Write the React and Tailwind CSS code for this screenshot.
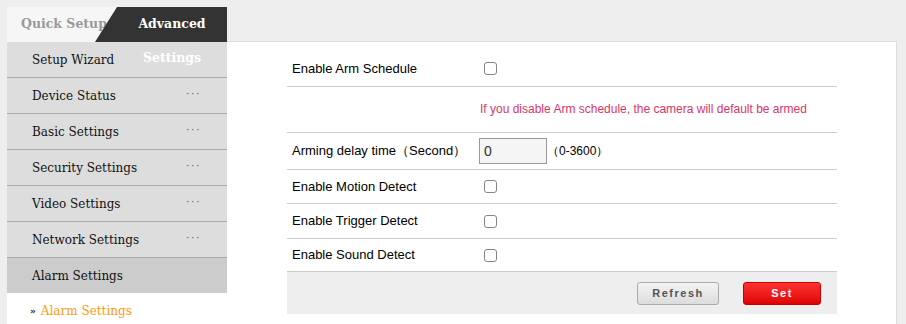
import React from "react";

const menu = [
  { label: "Setup Wizard", dots: false },
  { label: "Device Status", dots: true },
  { label: "Basic Settings", dots: true },
  { label: "Security Settings", dots: true },
  { label: "Video Settings", dots: true },
  { label: "Network Settings", dots: true },
];

function Check() {
  return (
    <span className="inline-block ml-[5px] w-[13px] h-[13px] rounded-[3px] border border-[#858585] bg-white align-middle" />
  );
}

function Row({ label, children, h }) {
  return (
    <div className={`flex items-center ${h} border-b border-[#cccccc]`}>
      <div className="w-[192px] pl-[5px] text-[13px] text-black">{label}</div>
      <div className="flex items-center">{children}</div>
    </div>
  );
}

export default function App() {
  return (
    <div className="w-[906px] h-[324px] overflow-hidden bg-[#eeeeee] flex" style={{ fontFamily: '"Liberation Sans", Arial, sans-serif' }}>
      {/* Left column */}
      <div className="ml-[7px] mt-[7px] w-[220px] flex flex-col" style={{ fontFamily: '"DejaVu Serif", serif' }}>
        <div className="relative h-[35px] bg-[#f6f6f6] flex">
          <div className="pl-[14px] flex items-center text-[12.5px] font-bold text-[#9a9a9a] h-full">Quick Setup</div>
          <div className="absolute top-0 right-0 h-full w-[132px] bg-[#333333] [clip-path:polygon(22px_0,100%_0,100%_100%,0_100%)]" />
          <div className="absolute top-0 left-[118px] w-[94px] text-center text-[12.5px] font-bold text-white leading-[34px]">
            Advanced Settings
          </div>
        </div>
        {menu.map((m) => (
          <div key={m.label} className="h-[36px] bg-[#dddddd] border-b border-[#aaaaaa] flex items-center pl-[25px] pr-[26px] justify-between text-[12px] text-[#111]">
            <span>{m.label}</span>
            {m.dots && <span className="text-[#777] text-[11px] tracking-[1.5px]">···</span>}
          </div>
        ))}
        <div className="h-[35px] bg-[#cccccc] flex items-center pl-[25px] text-[12px] text-[#111]">Alarm Settings</div>
        <div className="flex-1 bg-white flex items-start pt-[9px] pl-[23px] text-[12px] text-[#ff9a0a]">
          <span className="text-[#333] text-[9px] mr-[5px] mt-[3px] font-bold" style={{ fontFamily: '"DejaVu Sans", sans-serif' }}>&#187;</span>
          <span>Alarm Settings</span>
        </div>
      </div>

      {/* Right panel */}
      <div className="mt-[41px] mr-[9px] flex-1 bg-white border-t border-r border-[#dddddd] pl-[60px] pt-[9px]">
        <div className="w-[550px]">
          <Row label="Enable Arm Schedule" h="h-[36px]"><Check /></Row>
          <div className="h-[46px] border-b border-[#cccccc] flex items-center pl-[193px] text-[12px] text-[#d9356b] pb-[2px]">
            If you disable Arm schedule, the camera will default be armed
          </div>
          <Row label="Arming delay time（Second）" h="h-[37px]">
            <div className="w-[68px] h-[26px] border border-[#999] bg-[#f5f5f5] text-[14px] text-[#333] pl-[4px] flex items-center">0</div>
            <span className="text-[12px] text-black">（0-3600）</span>
          </Row>
          <Row label="Enable Motion Detect" h="h-[34px]"><Check /></Row>
          <Row label="Enable Trigger Detect" h="h-[35px]"><Check /></Row>
          <Row label="Enable Sound Detect" h="h-[33px]"><Check /></Row>
          <div className="h-[42px] bg-[#eeeeee] flex items-center pl-[350px] gap-[24px]">
            <button className="w-[82px] h-[23px] rounded-[3px] border border-[#aaaaaa] bg-gradient-to-b from-[#f4f4f4] to-[#dcdcdc] text-[11px] font-bold text-[#555] tracking-[1.5px]">Refresh</button>
            <button className="w-[78px] h-[23px] rounded-[3px] border border-[#c40000] bg-gradient-to-b from-[#ff3030] to-[#dd0000] text-[11px] font-bold text-white tracking-[1.5px]">Set</button>
          </div>
        </div>
      </div>
    </div>
  );
}
